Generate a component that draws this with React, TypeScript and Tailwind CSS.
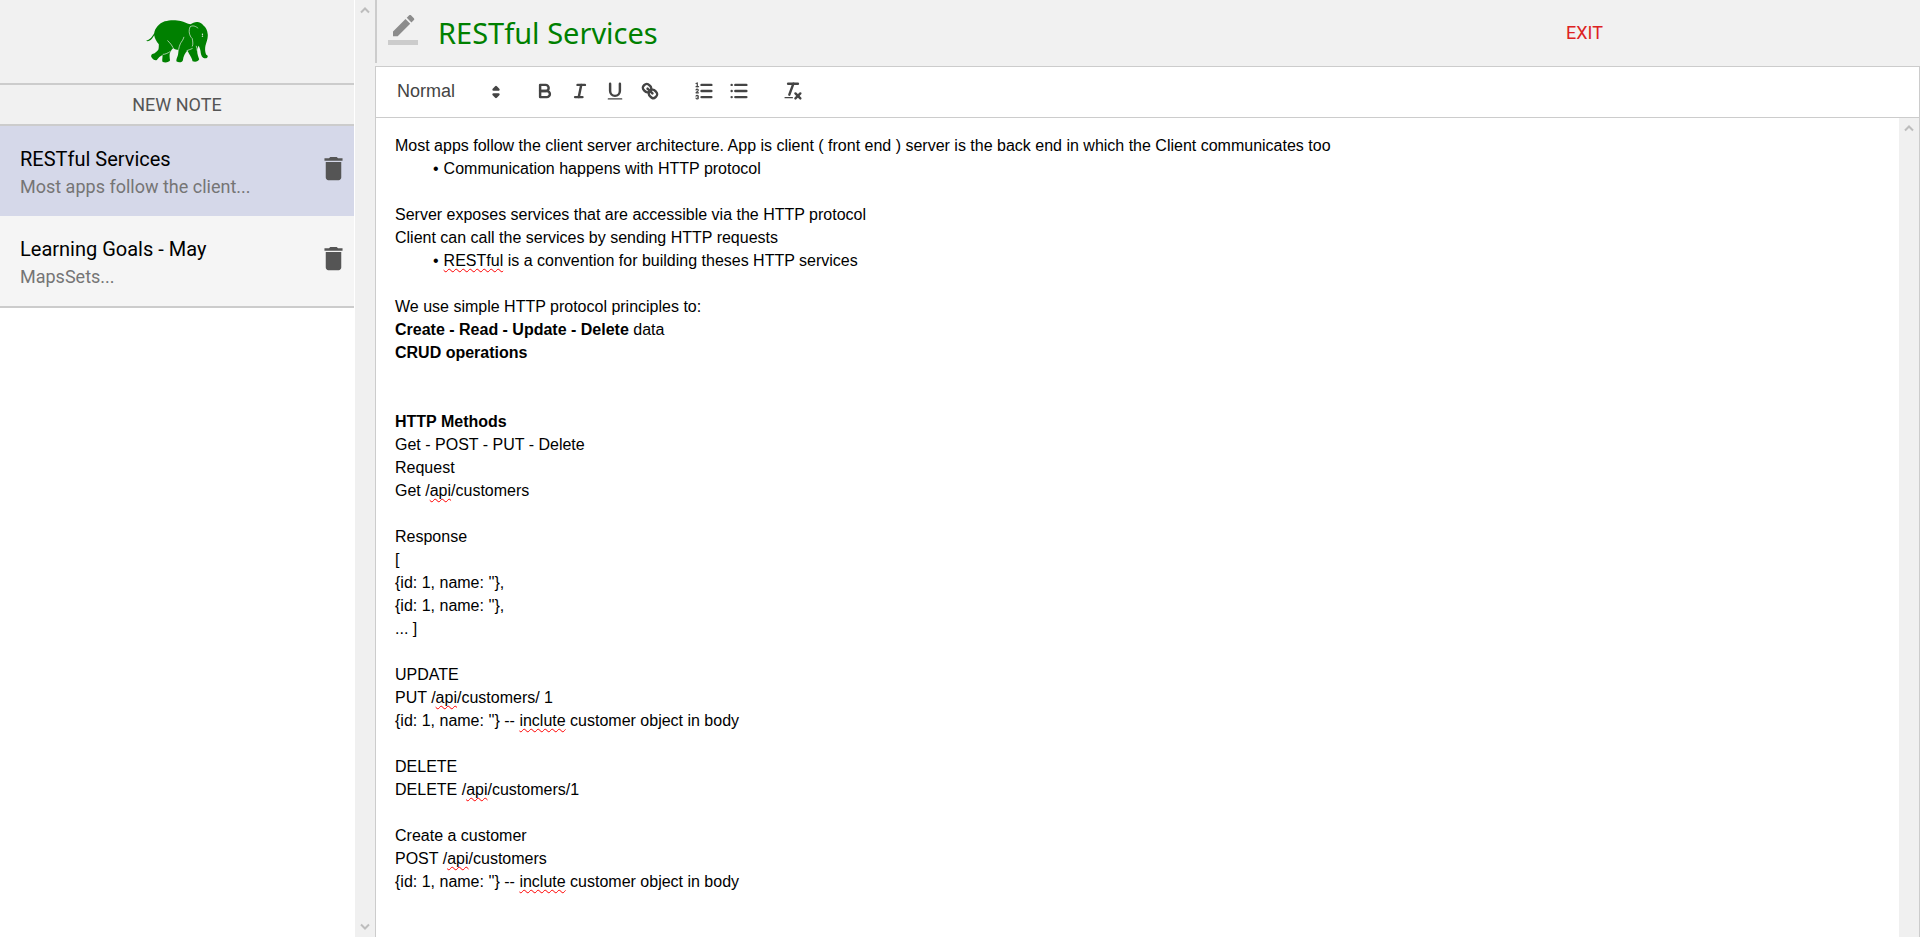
import { Fragment, type ReactNode } from "react";

type Note = { title: string; preview: string; active?: boolean };

const notes: Note[] = [
  { title: "RESTful Services", preview: "Most apps follow the client...", active: true },
  { title: "Learning Goals - May", preview: "MapsSets..." },
];

function Typo({ children }: { children: ReactNode }) {
  return (
    <span className="underline decoration-[#ff0000] decoration-wavy decoration-1 underline-offset-2 [text-decoration-skip-ink:none]">
      {children}
    </span>
  );
}

const lines: { text?: ReactNode; bullet?: boolean }[] = [
  { text: "Most apps follow the client server architecture. App is client ( front end ) server is the back end in which the Client communicates too" },
  { text: "Communication happens with HTTP protocol", bullet: true },
  {},
  { text: "Server exposes services that are accessible via the HTTP protocol" },
  { text: "Client can call the services by sending HTTP requests" },
  { text: <><Typo>RESTful</Typo> is a convention for building theses HTTP services</>, bullet: true },
  {},
  { text: "We use simple HTTP protocol principles to:" },
  { text: <><strong>Create - Read - Update - Delete</strong> data</> },
  { text: <strong>CRUD operations</strong> },
  {},
  {},
  { text: <strong>HTTP Methods</strong> },
  { text: "Get - POST - PUT - Delete" },
  { text: "Request" },
  { text: <>Get /<Typo>api</Typo>/customers</> },
  {},
  { text: "Response" },
  { text: "[" },
  { text: "{id: 1, name: ''}," },
  { text: "{id: 1, name: ''}," },
  { text: "... ]" },
  {},
  { text: "UPDATE" },
  { text: <>PUT /<Typo>api</Typo>/customers/ 1</> },
  { text: <>{"{id: 1, name: ''} -- "}<Typo>inclute</Typo> customer object in body</> },
  {},
  { text: "DELETE" },
  { text: <>DELETE /<Typo>api</Typo>/customers/1</> },
  {},
  { text: "Create a customer" },
  { text: <>POST /<Typo>api</Typo>/customers</> },
  { text: <>{"{id: 1, name: ''} -- "}<Typo>inclute</Typo> customer object in body</> },
];

function Elephant() {
  return (
    <svg viewBox="0 0 186 130" className="h-[43px] w-[62px]" role="img" aria-label="Elephant logo">
      <path
        fill="#008000"
        d="M24 40C26 26 38 10 56 4C72-1 92 0 104 3C115 6 124 11 134 13C140 8 148 5 156 6C164 7 169 11 173 17C180 22 185 32 186 44C187 56 182 68 179 78C177 88 178 98 181 104C183 107 186 106 186 110C185 116 178 117 172 114C166 110 165 102 164 94C163 88 161 82 158 78C156 83 154 88 154 94C154 103 158 112 160 119C158 126 148 128 140 125C139 117 134 109 129 101C127 97 126 95 124 93C117 101 112 110 111 121C110 129 98 130 91 125C91 119 93 114 95 109C97 102 97 96 98 89C92 92 86 89 82 85C76 90 73 96 71 102C70 109 71 117 72 122C69 129 55 130 49 126C47 119 50 114 49 106C42 109 37 115 32 121C26 124 18 117 15 111C14 104 18 102 24 101C29 98 33 95 36 91C38 86 38 80 38 73C31 66 26 56 24 46C20 53 15 61 9 63C5 65 1 64 0 62C10 61 17 52 24 40Z"
      />
      <path
        fill="none"
        stroke="#f1f1f1"
        strokeWidth="2"
        d="M133 20C127 32 130 48 139 56C141 66 142 74 139 80M133 20C142 15 151 20 157 25M64 62C72 69 78 77 81 84M114 51C112 60 106 66 103 72C100 78 99 84 98 89M122 93C127 91 133 89 140 86M50 104C58 104 67 99 73 95M151 78C153 83 154 88 154 93"
      />
      <circle cx="170" cy="43" r="2" fill="#f1f1f1" />
      <circle cx="170" cy="49" r="2" fill="#f1f1f1" />
    </svg>
  );
}

function TrashIcon() {
  return (
    <svg viewBox="0 0 24 24" className="h-[31px] w-[31px]" fill="#555555" aria-hidden="true">
      <path d="M6 19c0 1.1.9 2 2 2h8c1.1 0 2-.9 2-2V7H6v12zM19 4h-3.500l-1-1h-5l-1 1H5v2h14V4z" />
    </svg>
  );
}

function ScrollArrow({ down }: { down?: boolean }) {
  return (
    <svg viewBox="0 0 10 8" className="h-2 w-[10px]" fill="none" stroke="#bdbdbd" strokeWidth="2" aria-hidden="true">
      <path d={down ? "M1 1.500L5 5.500L9 1.500" : "M1 6.500L5 2.500L9 6.500"} />
    </svg>
  );
}

const stroke = "fill-none stroke-[#444] stroke-2 [stroke-linecap:round] [stroke-linejoin:round]";
const filled = "fill-[#444] stroke-[#444] stroke-2 [stroke-linecap:round] [stroke-linejoin:round]";
const thin = "fill-none stroke-[#444] stroke-1 [stroke-linecap:round] [stroke-linejoin:round]";

const tools: { label: string; icon: ReactNode; gap?: boolean }[] = [
  {
    label: "Bold",
    icon: (
      <>
        <path className={stroke} d="M5,4H9.500A2.500,2.500,0,0,1,12,6.500v0A2.500,2.500,0,0,1,9.500,9H5A0,0,0,0,1,5,9V4A0,0,0,0,1,5,4Z" />
        <path className={stroke} d="M5,9h5.500A2.500,2.500,0,0,1,13,11.500v0A2.500,2.500,0,0,1,10.500,14H5a0,0,0,0,1,0,0V9A0,0,0,0,1,5,9Z" />
      </>
    ),
  },
  {
    label: "Italic",
    icon: (
      <>
        <line className={stroke} x1="7" x2="13" y1="4" y2="4" />
        <line className={stroke} x1="5" x2="11" y1="14" y2="14" />
        <line className={stroke} x1="8" x2="10" y1="14" y2="4" />
      </>
    ),
  },
  {
    label: "Underline",
    icon: (
      <>
        <path className={stroke} d="M5,3V9a4.012,4.012,0,0,0,4,4H9a4.012,4.012,0,0,0,4-4V3" />
        <rect fill="#444" height="1" rx="0.500" ry="0.500" width="12" x="3" y="15" />
      </>
    ),
  },
  {
    label: "Link",
    icon: (
      <>
        <line className={stroke} x1="7" x2="11" y1="7" y2="11" />
        <path className={stroke} d="M8.900,4.577a3.476,3.476,0,0,1,.36,4.679A3.476,3.476,0,0,1,4.577,8.900C3.185,7.500,2.035,6.400,4.217,4.217S7.500,3.185,8.900,4.577Z" />
        <path className={stroke} d="M13.423,9.100a3.476,3.476,0,0,0-4.679-.36,3.476,3.476,0,0,0,.36,4.679c1.392,1.392,2.500,2.542,4.679.36S14.815,10.500,13.423,9.100Z" />
      </>
    ),
  },
  {
    label: "Numbered list",
    gap: true,
    icon: (
      <>
        <line className={stroke} x1="7" x2="15" y1="4" y2="4" />
        <line className={stroke} x1="7" x2="15" y1="9" y2="9" />
        <line className={stroke} x1="7" x2="15" y1="14" y2="14" />
        <line className={thin} x1="2.500" x2="4.500" y1="5.500" y2="5.500" />
        <path fill="#444" d="M3.500,6A0.500,0.500,0,0,1,3,5.500V3.085l-0.276.138A0.500,0.500,0,0,1,2.053,3c-0.124-.247-0.023-0.324.224-0.447l1-.5A0.500,0.500,0,0,1,4,2.500v3A0.500,0.500,0,0,1,3.500,6Z" />
        <path className={thin} d="M4.500,10.500h-2c0-.234,1.850-1.076,1.850-2.234A0.959,0.959,0,0,0,2.500,8.156" />
        <path className={thin} d="M2.500,14.846a0.959,0.959,0,0,0,1.850-.109A0.700,0.700,0,0,0,3.750,14a0.688,0.688,0,0,0,.6-0.736,0.959,0.959,0,0,0-1.850-.109" />
      </>
    ),
  },
  {
    label: "Bullet list",
    icon: (
      <>
        <line className={stroke} x1="6" x2="15" y1="4" y2="4" />
        <line className={stroke} x1="6" x2="15" y1="9" y2="9" />
        <line className={stroke} x1="6" x2="15" y1="14" y2="14" />
        <line className={stroke} x1="3" x2="3" y1="4" y2="4" />
        <line className={stroke} x1="3" x2="3" y1="9" y2="9" />
        <line className={stroke} x1="3" x2="3" y1="14" y2="14" />
      </>
    ),
  },
  {
    label: "Clear formatting",
    gap: true,
    icon: (
      <>
        <line className={stroke} x1="5" x2="13" y1="3" y2="3" />
        <line className={stroke} x1="6" x2="9.350" y1="12" y2="3" />
        <line className={stroke} x1="11" x2="15" y1="11" y2="15" />
        <line className={stroke} x1="15" x2="11" y1="11" y2="15" />
        <rect fill="#444" height="1" rx="0.500" ry="0.500" width="7" x="2" y="14" />
      </>
    ),
  },
];

export default function App() {
  return (
    <div className="flex h-screen overflow-hidden bg-white">
      <aside className="flex w-[375px] shrink-0 font-[Roboto,sans-serif]">
        <div className="flex min-w-0 flex-1 flex-col">
          <header className="flex h-[83px] items-center justify-center bg-[#f1f1f1]">
            <Elephant />
          </header>
          <button type="button" className="h-[43px] border-y-2 border-[#cccccc] bg-[#f1f1f1] text-lg text-[#555555]">
            NEW NOTE
          </button>
          <ul className="border-b-2 border-[#cccccc]">
            {notes.map((note) => (
              <li
                key={note.title}
                className={
                  note.active
                    ? "flex h-[90px] items-center justify-between bg-[#d5d8e9] pr-[5px] pb-1.5 pl-5"
                    : "flex h-[90px] items-center justify-between bg-[#f5f5f5] pr-[5px] pb-1.5 pl-5"
                }
              >
                <div className="pt-2.5">
                  <h2 className="text-xl leading-7 text-black">{note.title}</h2>
                  <p className="text-lg leading-7 text-[#757575]">{note.preview}</p>
                </div>
                <button type="button" aria-label={"Delete " + note.title}>
                  <TrashIcon />
                </button>
              </li>
            ))}
          </ul>
        </div>
        <div className="ml-px flex w-5 flex-col items-center justify-between bg-[#f0f0f0] py-1.5">
          <ScrollArrow />
          <ScrollArrow down />
        </div>
      </aside>

      <main className="flex min-w-0 flex-1 flex-col">
        <header className="flex h-[66px] shrink-0 bg-[#f1f1f1]">
          <div className="flex h-[63px] flex-1 items-center border-l-2 border-[#cccccc] pb-[3px] pl-[11px]">
            <svg viewBox="0 0 24 24" className="h-[30px] w-[30px]" aria-hidden="true">
              <path fill="#8c8c8c" d="M17.750 7L14 3.250l-10 10V17h3.750l10-10zm2.960-2.960c.39-.39.39-1.020 0-1.410L18.370.290c-.39-.39-1.020-.39-1.410 0L15 2.250 18.750 6l1.960-1.960z" />
              <path fill="#cccccc" d="M0 20h24v4H0z" />
            </svg>
            <input
              aria-label="Note title"
              defaultValue="RESTful Services"
              className="ml-5 h-12 min-w-0 flex-1 bg-transparent pt-1 font-['Noto_Sans',sans-serif] text-[29px] text-[#008000] outline-none"
            />
          </div>
          <button type="button" className="mr-[317px] font-[Roboto,sans-serif] text-lg text-[#dd2222]">
            EXIT
          </button>
        </header>

        <section className="flex min-h-0 flex-1 flex-col border-x border-t border-[#cccccc] font-['Liberation_Sans',Arial,sans-serif]">
          <div className="flex h-[51px] shrink-0 items-center border-b border-[#cccccc] pb-0.5 pl-[21px] text-[#444444]">
            <div className="relative mr-[26px] w-[104px]">
              <select aria-label="Text style" className="w-full appearance-none bg-transparent text-lg outline-none">
                <option>Normal</option>
              </select>
              <svg viewBox="0 0 18 18" className="pointer-events-none absolute top-1 -right-1.5 h-[22px] w-[22px]" aria-hidden="true">
                <polygon className={filled} points="7 11 9 13 11 11 7 11" />
                <polygon className={filled} points="7 7 9 5 11 7 7 7" />
              </svg>
            </div>
            {tools.map((tool) => (
              <Fragment key={tool.label}>
                {tool.gap && <span className="w-[19px]" />}
                <button type="button" aria-label={tool.label} className="flex w-[35px] justify-center">
                  <svg viewBox="0 0 18 18" className="h-[22px] w-[22px]" aria-hidden="true">
                    {tool.icon}
                  </svg>
                </button>
              </Fragment>
            ))}
          </div>
          <div className="flex min-h-0 flex-1">
            <article className="min-w-0 flex-1 px-[19px] py-4 text-[16px] leading-[23px] text-black">
              {lines.map((line, i) => (
                <p key={i} className={line.bullet ? "flex min-h-[23px] gap-[5px] pl-[38px]" : "min-h-[23px]"}>
                  {line.bullet && <span>•</span>}
                  <span>{line.text}</span>
                </p>
              ))}
            </article>
            <div className="flex w-5 justify-center bg-[#f0f0f0] pt-1.5">
              <ScrollArrow />
            </div>
          </div>
        </section>
      </main>
    </div>
  );
}
